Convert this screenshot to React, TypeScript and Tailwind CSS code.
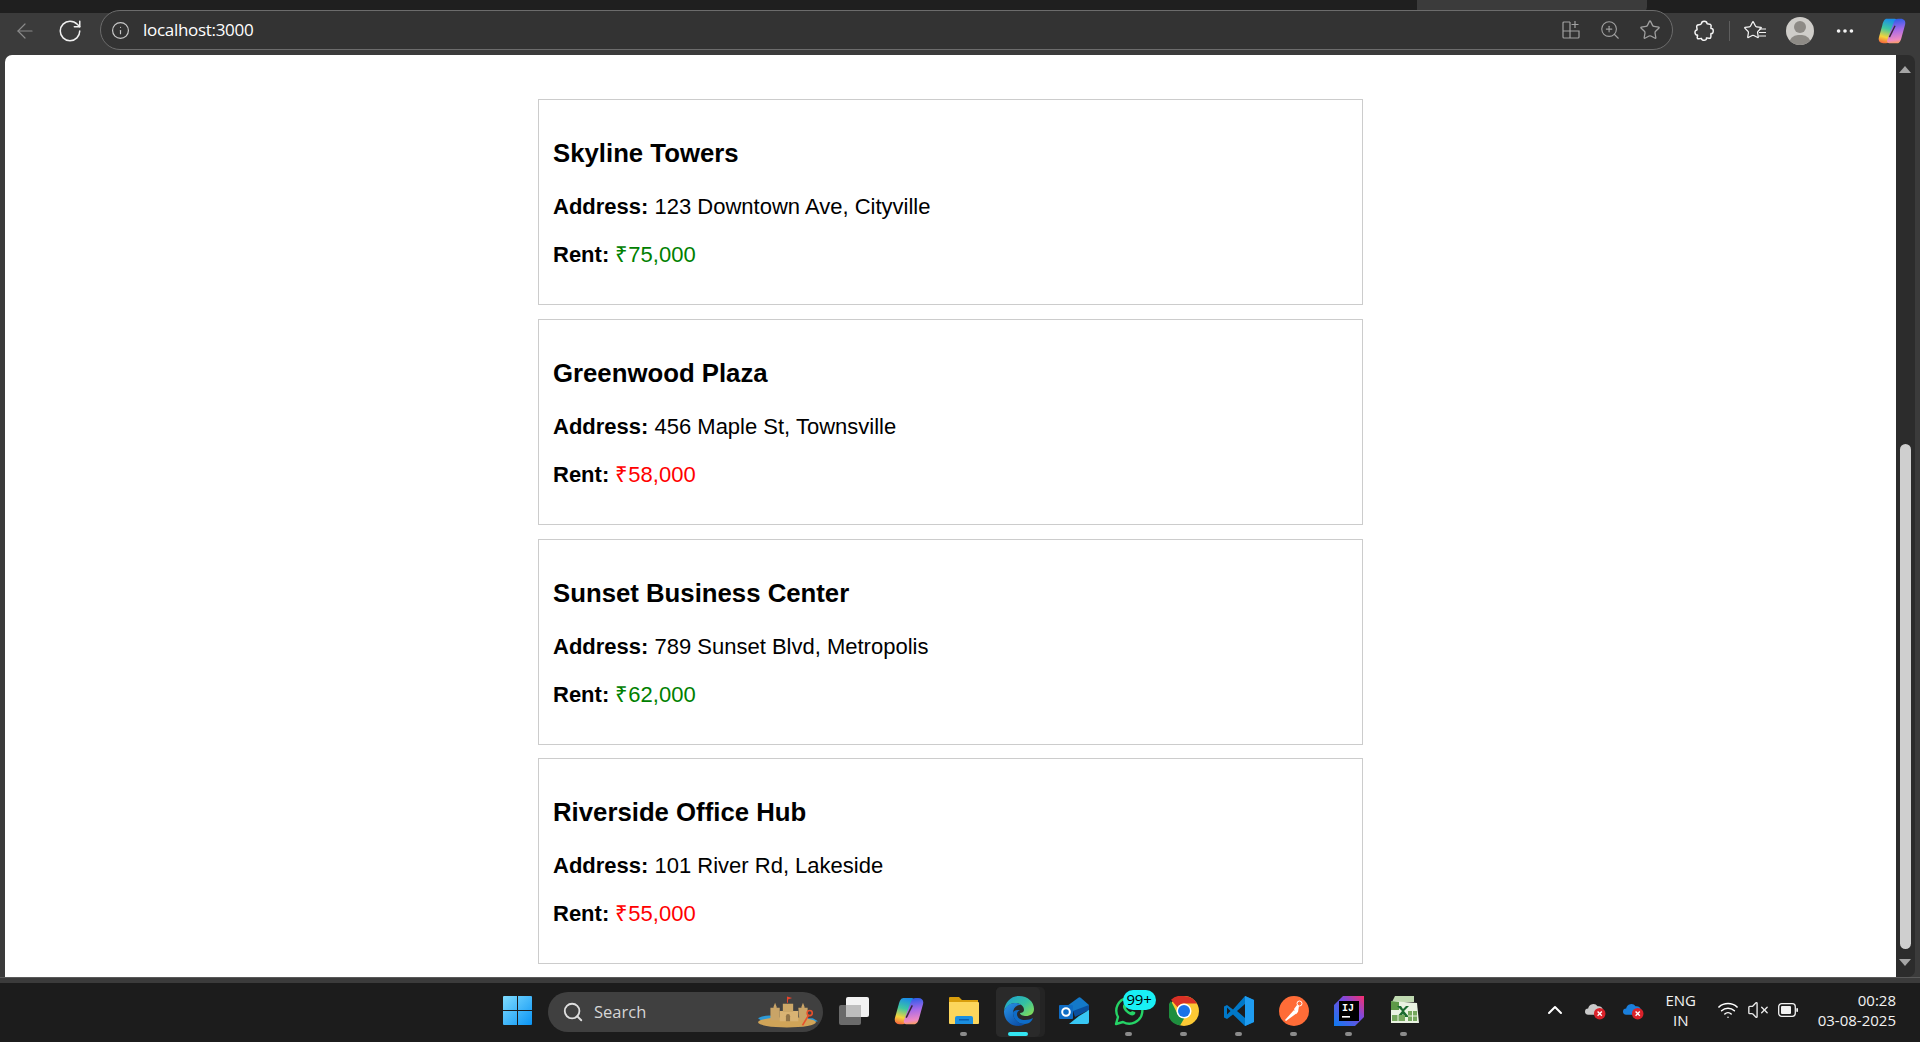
import { ReactNode } from "react";
import { ArrowLeft, ChevronUp, Ellipsis, Info, RotateCw, Search, Star, VolumeX, Wifi, ZoomIn } from "lucide-react";

const offices = [
  { name: "Skyline Towers", address: "123 Downtown Ave, Cityville", rent: 75000 },
  { name: "Greenwood Plaza", address: "456 Maple St, Townsville", rent: 58000 },
  { name: "Sunset Business Center", address: "789 Sunset Blvd, Metropolis", rent: 62000 },
  { name: "Riverside Office Hub", address: "101 River Rd, Lakeside", rent: 55000 },
];

function OfficeCard({ name, address, rent }: { name: string; address: string; rent: number }) {
  return (
    <div className="h-[206px] border border-[#ccc] px-[14px] pt-[37px] text-black">
      <h3 className="text-[25.75px] leading-[32px] font-bold">{name}</h3>
      <p className="mt-[25px] text-[22px] leading-[26px]">
        <strong>Address:</strong> {address}
      </p>
      <p className="mt-[22px] text-[22px] leading-[26px]">
        <strong>Rent:</strong>{" "}
        <span className={rent > 60000 ? "text-[#008000]" : "text-[#ff0000]"}>
          ₹{rent.toLocaleString("en-IN")}
        </span>
      </p>
    </div>
  );
}

function CopilotLogo({ id, size }: { id: string; size: number }) {
  return (
    <svg width={size} height={size} viewBox="0 0 32 32">
      <defs>
        <linearGradient id={`${id}a`} x1="0.5" y1="0" x2="0.3" y2="1">
          <stop offset="0" stopColor="#1b8de8" />
          <stop offset="0.4" stopColor="#3fc7a0" />
          <stop offset="0.75" stopColor="#f5d33c" />
          <stop offset="1" stopColor="#f56a3c" />
        </linearGradient>
        <linearGradient id={`${id}b`} x1="0.5" y1="0" x2="0.6" y2="1">
          <stop offset="0" stopColor="#2a5ce8" />
          <stop offset="0.45" stopColor="#a86ae8" />
          <stop offset="0.85" stopColor="#f08ac0" />
          <stop offset="1" stopColor="#f8a05c" />
        </linearGradient>
      </defs>
      <path d="M10 2h9c2 0 3 1.500 2.500 3.500L14 26c-.7 2-2.500 4-5 4H6c-3.500 0-6-2.500-5-6.500L5 9c1-4 2.500-7 5-7z" fill={`url(#${id}a)`} />
      <path d="M22 30h-9c-2 0-3-1.500-2.500-3.500L18 6c.7-2 2.500-4 5-4h3c3.500 0 6 2.500 5 6.500L27 23c-1 4-2.500 7-5 7z" fill={`url(#${id}b)`} />
      <path d="M19.500 10L13 23" stroke="#3a2438" strokeWidth="1.600" />
    </svg>
  );
}

function WindowsLogo() {
  return (
    <svg width="29" height="29" viewBox="0 0 29 29">
      <defs>
        <linearGradient id="win" x1="0" y1="0" x2="1" y2="1">
          <stop offset="0" stopColor="#7fdcff" />
          <stop offset="1" stopColor="#0a94f4" />
        </linearGradient>
      </defs>
      <path d="M1 0h13v14H0V1a1 1 0 0 1 1-1zM15 0h13a1 1 0 0 1 1 1v13H15zM0 15h14v14H1a1 1 0 0 1-1-1zM15 15h14v13a1 1 0 0 1-1 1H15z" fill="url(#win)" />
    </svg>
  );
}

function SandCastle() {
  return (
    <svg width="62" height="34" viewBox="0 0 60 32">
      <path d="M1 22c6-3 12-3 16-2v5H5z" fill="#2d9ad8" />
      <path d="M44 22h10l5 3-10 2z" fill="#2d9ad8" />
      <ellipse cx="29" cy="26" rx="28" ry="5" fill="#d0a458" />
      <path d="M13 12h3v-1l1.500-4 1.500 4v1h3v12H13z" fill="#c9a467" />
      <path d="M40 12h3v-1l1.500-4 1.500 4v1h3v12h-8z" fill="#c9a467" />
      <path d="M22 15h18v10H22z" fill="#d9b373" />
      <path d="M25 8h10v8H25z" fill="#cda868" />
      <path d="M29 7V1l5 1.500-4 1.500v3z" fill="#e8452c" />
      <path d="M28 25v-5a2 2 0 0 1 4 0v5z" fill="#8f7348" />
      <path d="M44 29l6-10" stroke="#e8502c" strokeWidth="1.600" />
      <circle cx="51" cy="17" r="2.500" fill="none" stroke="#e8502c" strokeWidth="1.500" />
    </svg>
  );
}

function TaskView() {
  return (
    <svg width="30" height="28" viewBox="0 0 30 28">
      <rect x="0" y="8" width="22" height="20" rx="2" fill="#6a6a6a" />
      <rect x="7" y="0" width="23" height="20" rx="2" fill="#f2f2f2" />
      <rect x="7" y="8" width="15" height="12" fill="#bdbdbd" />
    </svg>
  );
}

function Explorer() {
  return (
    <svg width="30" height="28" viewBox="0 0 30 28">
      <path d="M1 0h9l3 3h16v6H0V1a1 1 0 0 1 1-1z" fill="#d99e0c" />
      <path d="M0 5h29a1 1 0 0 1 1 1v20a1 1 0 0 1-1 1H1a1 1 0 0 1-1-1z" fill="#fcd65c" />
      <path d="M6 21a2 2 0 0 1 2-2h14a2 2 0 0 1 2 2v6H6z" fill="#1b8fe0" />
      <rect x="10" y="22" width="10" height="1.500" fill="#0b5fae" />
    </svg>
  );
}

function EdgeLogo() {
  return (
    <svg width="30" height="30" viewBox="0 0 30 30">
      <defs>
        <linearGradient id="edgeA" x1="0" y1="0" x2="1" y2="0.8">
          <stop offset="0" stopColor="#1a9fd8" />
          <stop offset="0.6" stopColor="#35c1a0" />
          <stop offset="1" stopColor="#7fdc5c" />
        </linearGradient>
        <linearGradient id="edgeB" x1="0" y1="0" x2="0.7" y2="1">
          <stop offset="0" stopColor="#2a95e8" />
          <stop offset="1" stopColor="#0b4fa8" />
        </linearGradient>
      </defs>
      <path d="M15 0c9 0 15 6 15 13 0 5-4 7-8 7-3 0-6-1-6-3 2 0 4-1 4-3 0-4-4-7-9-7C7 7 2 10 0 15 1 6 7 0 15 0z" fill="url(#edgeA)" />
      <path d="M0 15c2-5 6-8 11-8 3 0 5 1 6 2-5 0-8 3-8 8 0 6 5 11 12 11-2 1-4 2-7 2C6 30 0 24 0 15z" fill="url(#edgeB)" />
      <path d="M9 17c0 6 5 11 12 11 4 0 7-3 8-6-2 1-5 2-8 2-6 0-8-3-8-6 0-2 1-3 3-4-4 0-7 1-7 3z" fill="#0d6cc8" />
    </svg>
  );
}

function OutlookLogo() {
  return (
    <svg width="30" height="28" viewBox="0 0 30 28">
      <path d="M8 9l11-8c1-1 2-1 3 0l8 7v6H8z" fill="#1479c9" />
      <path d="M14 14l16-6v5L16 20z" fill="#0a4f9e" />
      <path d="M10 27l10-8 10-6v12a2 2 0 0 1-2 2z" fill="#38c7f4" />
      <rect x="0" y="8" width="14" height="14" rx="1" fill="#0f6cc4" />
      <circle cx="7" cy="15" r="3.800" fill="none" stroke="#fff" strokeWidth="2" />
    </svg>
  );
}

function WhatsAppLogo() {
  return (
    <svg width="30" height="30" viewBox="0 0 30 30">
      <path d="M2 28l2-7a13 13 0 1 1 5 5z" fill="none" stroke="#25d366" strokeWidth="2.400" strokeLinejoin="round" />
      <path d="M10 8c-2 2-1 5 2 8s6 4 8 3c1-1 2-2 1-3l-3-1-1 1c-2 0-4-2-5-4l1-1-1-3c-1-1-1-1-2 0z" fill="#25d366" />
    </svg>
  );
}

function ChromeLogo() {
  return (
    <svg width="30" height="30" viewBox="0 0 30 30">
      <circle cx="15" cy="15" r="15" fill="#fcc934" />
      <path d="M15 0a15 15 0 0 1 13 7.500H15a7.500 7.500 0 0 0-6.500 3.750L2 3.800A15 15 0 0 1 15 0z" fill="#d93025" />
      <path d="M2 5A15 15 0 0 0 11 29.500l5-8.500a7.500 7.500 0 0 1-7.500-3.300z" fill="#1e8e3e" />
      <circle cx="15" cy="15" r="7.500" fill="#fff" />
      <circle cx="15" cy="15" r="6" fill="#1a73e8" />
    </svg>
  );
}

function VSCodeLogo() {
  return (
    <svg width="30" height="30" viewBox="0 0 30 30">
      <path d="M21 0l9 4v22l-9 4-12-11.500-6 4.500-3-1.500v-11L3 9l6 4.500z" fill="#0078c8" />
      <path d="M21 0l9 4v22l-9 4z" fill="#1f9cf0" />
      <path d="M21 8l-8 7 8 7z" fill="#1c1c1c" />
      <path d="M3 11.500v7l3.500-3.500z" fill="#1c1c1c" />
    </svg>
  );
}

function PostmanLogo() {
  return (
    <svg width="30" height="30" viewBox="0 0 30 30">
      <circle cx="15" cy="15" r="15" fill="#ff6c37" />
      <path d="M6 24l9-10 3 3-11 8z" fill="#fff" />
      <path d="M15 13l3-4 2 1-1 6-2 2z" fill="#fff" />
      <circle cx="20.500" cy="7.500" r="2.500" fill="none" stroke="#fff" strokeWidth="1" />
    </svg>
  );
}

function IntellijLogo() {
  return (
    <svg width="30" height="30" viewBox="0 0 30 30">
      <defs>
        <linearGradient id="ijA" x1="0" y1="1" x2="1" y2="0">
          <stop offset="0" stopColor="#0a7cf0" />
          <stop offset="0.6" stopColor="#7a4ae0" />
          <stop offset="1" stopColor="#fc2e6c" />
        </linearGradient>
      </defs>
      <path d="M9 0h21v21l-9 9H0V9z" fill="url(#ijA)" />
      <rect x="5" y="5" width="20" height="20" fill="#000" />
      <text x="8" y="15" fill="#fff" fontSize="10" fontWeight="700" fontFamily="'Liberation Mono', monospace">IJ</text>
      <rect x="8" y="20" width="8" height="1.600" fill="#fff" />
    </svg>
  );
}

function ExcelLogo() {
  return (
    <svg width="30" height="30" viewBox="0 0 30 30">
      <path d="M6 0h19v6H3z" fill="#bfd9b0" />
      <path d="M2 5l26 2 2 20-28 0z" fill="#eaf3e2" />
      <path d="M2 5l8 1 0 8-8 0z" fill="#5e9a48" />
      <path d="M8 10h4l2 3 3-3h3l-5 5 5 6h-4l-2-3-3 3H8l5-6z" fill="#1c6b30" />
      <path d="M19 15h9v10h-9zM3 19h13v6H3z" fill="#76a85e" />
      <path d="M23.500 15v10M19 20h9M9 19v6" stroke="#eaf3e2" strokeWidth="1" />
    </svg>
  );
}

function CloudError({ color }: { color: string }) {
  return (
    <svg width="21" height="19" viewBox="0 0 20 18">
      <path d="M3 13a3 3 0 0 1 0-6 5 5 0 0 1 9-2 4 4 0 0 1 5 4H12l-2 4z" fill={color} />
      <circle cx="14" cy="12" r="5.500" fill="#d9222a" />
      <path d="M12 10l4 4m0-4l-4 4" stroke="#fff" strokeWidth="1.300" />
    </svg>
  );
}

function TaskbarIcon({ children, pinned, active }: { children: ReactNode; pinned?: boolean; active?: boolean }) {
  return (
    <div className="relative flex h-[59px] w-[55px] shrink-0 items-center justify-center pb-[4px]">
      {active && (
        <div className="absolute top-[4px] left-[5px] h-[50px] w-[49px] rounded-[5px] bg-[#242424]">
          <div className="h-full w-[44px] rounded-[5px] bg-[#2a2a2a]" />
        </div>
      )}
      <div className="relative flex">{children}</div>
      {pinned && <div className="absolute top-[49px] left-[24px] h-[4px] w-[7px] rounded-full bg-[#8b8b8b]" />}
      {active && <div className="absolute top-[49px] left-[17px] h-[4px] w-[20px] rounded-full bg-[#33e5f2]" />}
    </div>
  );
}

export default function App() {
  return (
    <div className="flex h-[1042px] w-[1920px] flex-col overflow-hidden bg-[#3b3b3b] font-['Open_Sans',sans-serif] text-white">
      {/* tab strip */}
      <div className="flex h-[13px] shrink-0 bg-[#1f1f1f]">
        <div className="ml-[1417px] h-full w-[230px] rounded-br-[6px] bg-[#3b3b3b]" />
      </div>

      {/* toolbar */}
      <div className="flex h-[42px] shrink-0 items-start">
        <div className="flex h-[35px] w-[100px] shrink-0 items-center">
          <ArrowLeft className="ml-[13px] h-[24px] w-[24px] text-[#8a8a8a]" strokeWidth={1.2} />
          <RotateCw className="ml-[20px] h-[26px] w-[26px] text-[#f0f0f0]" strokeWidth={1.4} />
        </div>
        <div className="flex h-[40px] w-[1573px] shrink-0 -translate-y-[3px] items-center rounded-full border border-[#6c6c6c] bg-[#333333] pr-[11px] pl-[10px]">
          <Info className="h-[19px] w-[19px] text-[#c8c8c8]" strokeWidth={1.5} />
          <span className="ml-[13px] text-[17px] tracking-[-0.3px] text-white">localhost:3000</span>
          <div className="ml-auto flex items-center gap-[18px] text-[#a0a0a0]">
            <svg width="20" height="20" viewBox="0 0 20 20" fill="none" stroke="currentColor" strokeWidth="1.200">
              <path d="M9 2H3a1 1 0 0 0-1 1v14a1 1 0 0 0 1 1h14a1 1 0 0 0 1-1v-6H2M9 2v16M14 1v7M10.500 4.500h7" />
            </svg>
            <ZoomIn className="h-[22px] w-[22px]" strokeWidth={1.2} />
            <Star className="h-[22px] w-[22px]" strokeWidth={1.4} />
          </div>
        </div>
        <div className="flex h-[35px] flex-1 items-center pl-[21px]">
          <svg width="20" height="22" viewBox="0 0 20 22" fill="none" stroke="#f4f4f4" strokeWidth="1.500" strokeLinejoin="round">
            <path d="M7.500 3.500C7.500 0.500 13 0.500 13 3.500c0 1 3.500-.5 4 1.500.5 1.500-.5 3 0 3.500 3-1 3 6 0 5-.5.500.5 3.500-.5 4.500-1 1-3-.5-4 0 .5 3-5 3-5 .5-1-.5-3 1-4 0S4 16 3.500 15c-3 .5-3.500-5-.5-5 .5-1-1-3 0-4.500s3.500 0 4.500-2z" />
          </svg>
          <div className="ml-[15px] h-[20px] w-px bg-[#5e5e5e]" />
          <div className="relative ml-[13px] flex h-[22px] w-[22px]">
            <Star className="h-[20px] w-[20px] text-[#f4f4f4]" strokeWidth={1.5} />
            <svg className="absolute top-[8px] left-[15px]" width="8" height="9" viewBox="0 0 8 9" stroke="#f4f4f4" strokeWidth="1.200">
              <path d="M1 1h7M1 4.500h7M1 8h7" />
            </svg>
          </div>
          <div className="relative ml-[21px] h-[28px] w-[28px] overflow-hidden rounded-full bg-[#cfcdc9]">
            <div className="absolute top-[4px] left-[8px] h-[12px] w-[12px] rounded-full bg-[#8d8a85]" />
            <div className="absolute top-[18px] left-[3px] h-[18px] w-[22px] rounded-full bg-[#8d8a85]" />
          </div>
          <Ellipsis className="ml-[20px] h-[22px] w-[22px] text-[#f4f4f4]" strokeWidth={2} />
          <div className="ml-[22px] flex">
            <CopilotLogo id="copilotBar" size={28} />
          </div>
        </div>
      </div>

      {/* page and scrollbar */}
      <div className="flex min-h-0 flex-1 pl-[5px]">
        <main className="flex w-[1891px] flex-col gap-[13.8px] overflow-hidden rounded-tl-[7px] bg-white pt-[44px] font-['Liberation_Sans',Arial,sans-serif]">
          {offices.map((office) => (
            <div key={office.name} className="mx-auto w-[825px] shrink-0">
              <OfficeCard {...office} />
            </div>
          ))}
        </main>
        <div className="flex w-[19px] flex-col items-center rounded-tr-[7px] rounded-br-[7px] bg-[#2c2c2c] pr-[1px]">
          <div className="mt-[11px] h-0 w-0 border-x-[6px] border-b-[7px] border-x-transparent border-b-[#a5a5a5]" />
          <div className="mt-[371px] h-[505px] w-[11px] rounded-full bg-[#cfcfcf]" />
          <div className="mt-[10px] h-0 w-0 border-x-[6px] border-t-[7px] border-x-transparent border-t-[#a5a5a5]" />
        </div>
      </div>
      <div className="h-[6px] shrink-0 border-t border-[#5a5a5a] bg-[#3b3b3b]" />

      {/* taskbar */}
      <div className="flex h-[59px] shrink-0 items-start bg-[#1c1c1c]">
        <div className="ml-[490px] flex">
          <TaskbarIcon>
            <WindowsLogo />
          </TaskbarIcon>
          <div className="mt-[9px] ml-[3px] flex h-[40px] w-[275px] items-center rounded-full bg-[#404040] pr-[4px] pl-[14px]">
            <Search className="h-[22px] w-[22px] text-[#dedede]" strokeWidth={2} />
            <span className="ml-[10px] text-[16.5px] text-[#d6d6d6]">Search</span>
            <div className="ml-auto flex">
              <SandCastle />
            </div>
          </div>
          <div className="ml-[3px] flex">
            <TaskbarIcon>
              <TaskView />
            </TaskbarIcon>
            <TaskbarIcon>
              <CopilotLogo id="copilotTask" size={30} />
            </TaskbarIcon>
            <TaskbarIcon pinned>
              <Explorer />
            </TaskbarIcon>
            <TaskbarIcon active>
              <EdgeLogo />
            </TaskbarIcon>
            <TaskbarIcon>
              <OutlookLogo />
            </TaskbarIcon>
            <TaskbarIcon pinned>
              <WhatsAppLogo />
              <span className="absolute -top-[6px] left-[9px] flex h-[20px] w-[33px] items-center justify-center rounded-full bg-[#19f0f5] text-[15px] tracking-[-0.3px] text-black">
                99+
              </span>
            </TaskbarIcon>
            <TaskbarIcon pinned>
              <ChromeLogo />
            </TaskbarIcon>
            <TaskbarIcon pinned>
              <VSCodeLogo />
            </TaskbarIcon>
            <TaskbarIcon pinned>
              <PostmanLogo />
            </TaskbarIcon>
            <TaskbarIcon pinned>
              <IntellijLogo />
            </TaskbarIcon>
            <TaskbarIcon pinned>
              <ExcelLogo />
            </TaskbarIcon>
          </div>
        </div>

        {/* tray */}
        <div className="ml-auto flex h-[54px] items-center pr-[24px]">
          <ChevronUp className="h-[24px] w-[24px] text-white" strokeWidth={2} />
          <div className="ml-[18px] flex">
            <CloudError color="#c9c9c9" />
          </div>
          <div className="ml-[17px] flex">
            <CloudError color="#1a7fdc" />
          </div>
          <div className="ml-[21px] flex w-[32px] flex-col items-center text-[15px] leading-[20px] text-[#f2f2f2]">
            <span>ENG</span>
            <span>IN</span>
          </div>
          <Wifi className="ml-[20px] h-[22px] w-[22px] text-white" strokeWidth={1.6} />
          <VolumeX className="ml-[8px] h-[22px] w-[22px] text-[#e8e8e8]" strokeWidth={1.5} />
          <svg className="ml-[9px]" width="20" height="14" viewBox="0 0 20 14" fill="none">
            <rect x="0.700" y="0.700" width="16.600" height="12.600" rx="3" stroke="#f2f2f2" strokeWidth="1.300" />
            <rect x="3" y="3" width="10" height="8" rx="1" fill="#f2f2f2" />
            <rect x="18.300" y="5" width="1.700" height="4" rx="0.800" fill="#f2f2f2" />
          </svg>
          <div className="ml-[20px] flex flex-col items-end text-[15px] leading-[20px] text-[#f2f2f2]">
            <span>00:28</span>
            <span>03-08-2025</span>
          </div>
        </div>
      </div>
    </div>
  );
}
